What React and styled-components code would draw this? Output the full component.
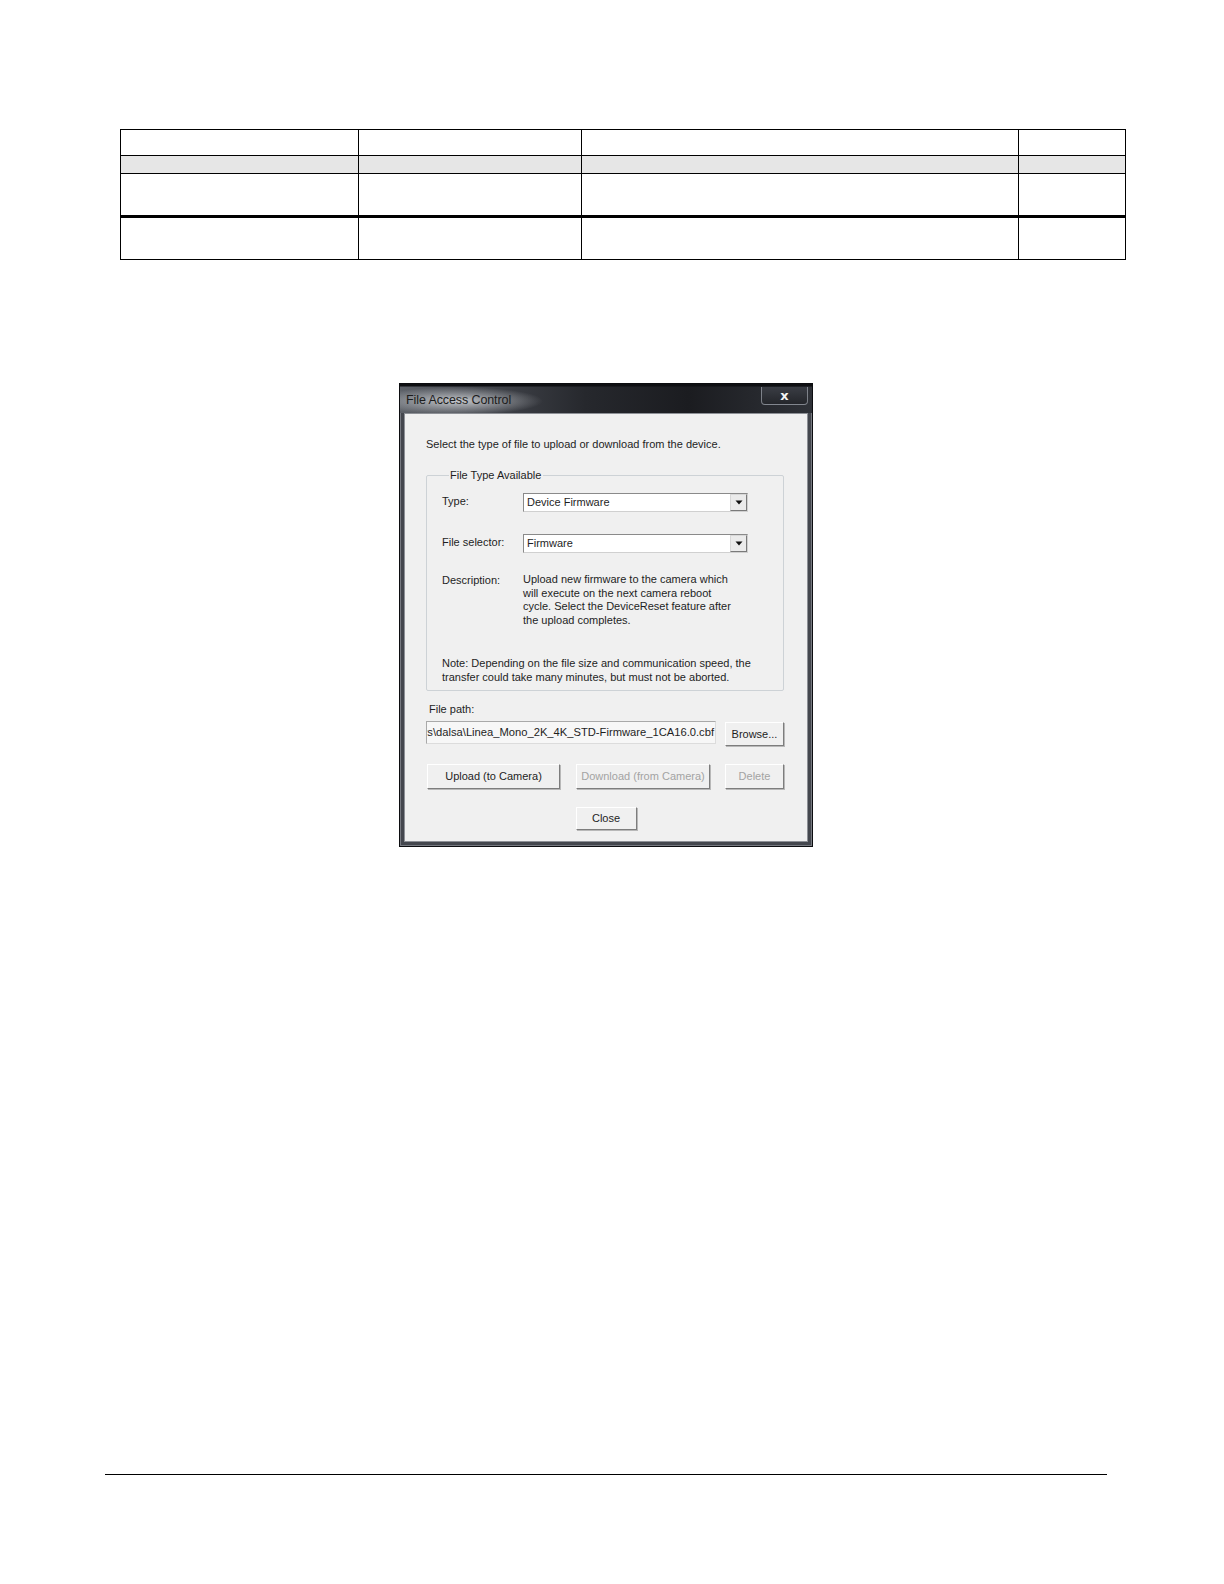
import React from "react";
import styled, { createGlobalStyle } from "styled-components";

const Global = createGlobalStyle`
  html, body { margin: 0; padding: 0; background: #fff; overflow: hidden; }
  body { font-family: "Liberation Sans", Arial, sans-serif; }
`;

const Page = styled.div`
  width: 1224px;
  height: 1584px;
  overflow: hidden;
  display: flex;
  flex-direction: column;
  box-sizing: border-box;
  padding-top: 129px;
`;

const Table = styled.table`
  margin-left: 120px;
  width: 1005px;
  border-collapse: collapse;
  table-layout: fixed;
  border: 1.5px solid #000;
`;

const Cell = styled.td`
  border-left: 1px solid #000;
  border-right: 1px solid #000;
  height: ${(p) => p.$h}px;
  padding: 0;
  background: ${(p) => (p.$shade ? "#e6e6e6" : "#fff")};
`;

const Row = styled.tr`
  border-bottom: ${(p) => p.$bottom || "1px solid #000"};
`;

const DialogWrap = styled.div`
  margin-top: 123px;
  margin-left: 399px;
`;

const Dialog = styled.div`
  width: 414px;
  height: 464px;
  box-sizing: border-box;
  background: #44474e;
  border: 1px solid #0c0d10;
  display: flex;
  flex-direction: column;
  padding: 0 4px 4px 4px;
  box-shadow: inset 1px 0 0 #777a81, inset -1px 0 0 #777a81, inset 0 -1px 0 #777a81;
`;

const TitleBar = styled.div`
  height: 29px;
  margin: 0 -4px;
  display: flex;
  align-items: flex-start;
  justify-content: space-between;
  background:
    radial-gradient(ellipse 85px 14px at 58px 17px, rgba(215, 218, 222, 0.85), rgba(215,218,222,0) 100%),
    linear-gradient(180deg, #0e0f12 0px, #0e0f12 2px, rgba(0,0,0,0) 3px),
    linear-gradient(90deg, #5d6168 0%, #464950 18%, #26282d 45%, #1b1c20 70%, #2f3238 100%);
`;

const TitleText = styled.span`
  margin: 9px 0 0 6px;
  font-size: 12.5px;
  color: #1c1c1c;
  letter-spacing: -0.1px;
`;

const CloseBtn = styled.div`
  margin: 3px 4px 0 0;
  width: 47px;
  height: 18px;
  box-sizing: border-box;
  border: 1px solid rgba(190, 195, 205, 0.55);
  border-top: none;
  border-radius: 0 0 4px 4px;
  background: linear-gradient(180deg, #3a3d44, #24262b);
  display: flex;
  align-items: center;
  justify-content: center;
  color: #f4f4f4;
  font-weight: bold;
  font-size: 13px;
  line-height: 1;
  font-family: "DejaVu Sans", sans-serif;
`;

const Client = styled.div`
  flex: 1;
  background: #f0f0f0;
  border: 1px solid #8d9096;
  display: flex;
  flex-direction: column;
  padding: 0 23px 0 21px;
  font-size: 11px;
  color: #1e1e1e;
`;

const Intro = styled.div`
  margin-top: 23px;
  line-height: 14px;
`;

const Group = styled.fieldset`
  margin: 17px 0 0 0;
  padding: 11px 0 5px 15px;
  border: 1px solid #cdd2d6;
  border-radius: 2px;
  display: flex;
  flex-direction: column;
`;

const Legend = styled.legend`
  margin-left: 7px;
  padding: 0 2px 0 1px;
  line-height: 14px;
`;

const FieldRow = styled.div`
  display: grid;
  grid-template-columns: 81px 225px;
  align-items: start;
  margin-top: ${(p) => p.$mt || 0}px;
`;

const Label = styled.div`
  line-height: 14px;
  padding-top: ${(p) => p.$pt || 0}px;
`;

const Select = styled.div`
  height: 19px;
  box-sizing: border-box;
  background: #fff;
  border: 1px solid #8a8a8a;
  border-right-color: #d0d0d0;
  border-bottom-color: #d0d0d0;
  display: flex;
  align-items: stretch;
`;

const SelectText = styled.div`
  flex: 1;
  padding-left: 3px;
  line-height: 17px;
`;

const Arrow = styled.div`
  width: 17px;
  box-sizing: border-box;
  background: #ebebeb;
  border: 1px solid #7a7a7a;
  border-top-color: #d8d8d8;
  border-left-color: #d8d8d8;
  display: flex;
  align-items: center;
  justify-content: center;
`;

const Desc = styled.div`
  line-height: 13.6px;
  white-space: nowrap;
`;

const Note = styled.div`
  margin-top: 30px;
  line-height: 13.6px;
  white-space: nowrap;
`;

const PathLabel = styled.div`
  margin: 11px 0 0 3px;
  line-height: 14px;
`;

const PathRow = styled.div`
  display: flex;
  align-items: flex-start;
  margin-top: 5px;
  gap: 9px;
`;

const PathInput = styled.div`
  width: 290px;
  height: 23px;
  box-sizing: border-box;
  background: #f7f7f7;
  border: 1px solid #a9a9a9;
  border-right-color: #dcdcdc;
  border-bottom-color: #dcdcdc;
  display: flex;
  justify-content: flex-end;
  align-items: center;
  overflow: hidden;
  white-space: nowrap;
  padding-right: 1px;
  font-size: 11.2px;
`;

const Button = styled.div`
  width: ${(p) => p.$w}px;
  height: ${(p) => p.$h || 25}px;
  margin-top: ${(p) => p.$mt || 0}px;
  margin-left: ${(p) => p.$ml || 0}px;
  box-sizing: border-box;
  background: #f0f0f0;
  border: 1px solid #fff;
  border-right-color: #7d7d7d;
  border-bottom-color: #7d7d7d;
  box-shadow: 1px 1px 0 #b8b8b8;
  display: flex;
  align-items: center;
  justify-content: center;
  color: ${(p) => (p.$disabled ? "#a3a3a3" : "#1e1e1e")};
  font-size: 11px;
  white-space: nowrap;
  flex-shrink: 0;
`;

const ButtonRow = styled.div`
  display: flex;
  margin-top: 18px;
  margin-left: 1px;
  gap: 16px;
`;

const CloseRow = styled.div`
  display: flex;
  justify-content: center;
  margin-top: 18px;
  padding-left: 2px;
`;

const Rule = styled.div`
  margin: auto 0 109px 105px;
  width: 1002px;
  height: 1.5px;
  background: #000;
`;

const DropArrow = () => (
  <svg width="8" height="5" viewBox="0 0 8 5">
    <path d="M0.5 0.5 H7.5 L4 4.5 Z" fill="#111" />
  </svg>
);

export default function App() {
  const widths = [238, 223, 437, 107];
  const rows = [
    { h: 25, bottom: "1.5px solid #000" },
    { h: 17, shade: true, bottom: "1px solid #000" },
    { h: 41, bottom: "3px solid #000" },
    { h: 41, bottom: "1px solid #000" },
  ];
  return (
    <>
      <Global />
      <Page>
        <Table>
          <colgroup>
            {widths.map((w, i) => (
              <col key={i} style={{ width: w }} />
            ))}
          </colgroup>
          <tbody>
            {rows.map((r, i) => (
              <Row key={i} $bottom={r.bottom}>
                {widths.map((w, j) => (
                  <Cell key={j} $h={r.h} $shade={r.shade} />
                ))}
              </Row>
            ))}
          </tbody>
        </Table>

        <DialogWrap>
          <Dialog>
            <TitleBar>
              <TitleText>File Access Control</TitleText>
              <CloseBtn>x</CloseBtn>
            </TitleBar>
            <Client>
              <Intro>Select the type of file to upload or download from the device.</Intro>
              <Group>
                <Legend>File Type Available</Legend>
                <FieldRow $mt={0}>
                  <Label $pt={1}>Type:</Label>
                  <Select>
                    <SelectText>Device Firmware</SelectText>
                    <Arrow>
                      <DropArrow />
                    </Arrow>
                  </Select>
                </FieldRow>
                <FieldRow $mt={22}>
                  <Label $pt={1}>File selector:</Label>
                  <Select>
                    <SelectText>Firmware</SelectText>
                    <Arrow>
                      <DropArrow />
                    </Arrow>
                  </Select>
                </FieldRow>
                <FieldRow $mt={20}>
                  <Label>Description:</Label>
                  <Desc>
                    Upload new firmware to the camera which
                    <br />
                    will execute on the next camera reboot
                    <br />
                    cycle. Select the DeviceReset feature after
                    <br />
                    the upload completes.
                  </Desc>
                </FieldRow>
                <Note>
                  Note: Depending on the file size and communication speed, the
                  <br />
                  transfer could take many minutes, but must not be aborted.
                </Note>
              </Group>
              <PathLabel>File path:</PathLabel>
              <PathRow>
                <PathInput>C:\Users\dalsa\Linea_Mono_2K_4K_STD-Firmware_1CA16.0.cbf</PathInput>
                <Button $w={59} $h={24} $mt={1}>Browse...</Button>
              </PathRow>
              <ButtonRow>
                <Button $w={133}>Upload (to Camera)</Button>
                <Button $w={134} $disabled>Download (from Camera)</Button>
                <Button $w={59} $disabled $ml={-1}>Delete</Button>
              </ButtonRow>
              <CloseRow>
                <Button $w={61} $h={23}>Close</Button>
              </CloseRow>
            </Client>
          </Dialog>
        </DialogWrap>

        <Rule />
      </Page>
    </>
  );
}
